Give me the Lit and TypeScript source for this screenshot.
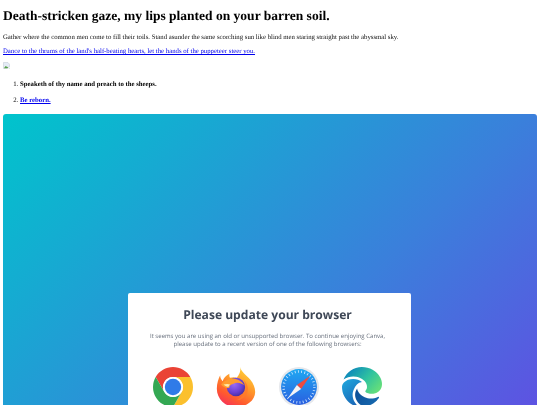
import { LitElement, html, css } from "lit";
import { customElement } from "lit/decorators.js";

@customElement("app-root")
export class AppRoot extends LitElement {
  static styles = css`
    :host { display: block; height: 405px; overflow: hidden; font-family: "Liberation Serif", serif; color: #000; }
    .page { padding: 0 3px; filter: blur(0.35px); text-rendering: geometricPrecision; }
    h1 { margin: 0; padding-top: 7px; font-size: 13.5px; line-height: 18px; font-weight: 700; }
    .lead { margin: 8px 0 0; font-size: 6.75px; line-height: 9px; color: #111; }
    .link { display: block; margin-top: 5px; font-size: 6.75px; line-height: 9px; color: #0000ee; text-decoration: underline; }
    .broken { display: block; margin-top: 6px; width: 7px; height: 7px; }
    ol { margin: 10.5px 0 0; padding: 0 0 0 17px; font-size: 6.75px; line-height: 9px; }
    li { margin-bottom: 7.5px; font-weight: 400; }
    li b { font-weight: 700; }
    li a { color: #0000ee; text-decoration: underline; font-weight: 700; }
    .hero {
      margin-top: 9px; height: 420px; border-radius: 3px; box-sizing: border-box; padding: 179px 1px 0 0;
      background: linear-gradient(135deg, #00c4cc 0%, #3a80db 55%, #7d2ae8 115%);
      display: flex; justify-content: center; align-items: flex-start;
    }
    .panel {
      width: 283px; background: #fff; border-radius: 2px; box-sizing: border-box; padding: 13px 4px 40px 0;
      display: flex; flex-direction: column; align-items: center; font-family: "Open Sans", sans-serif;
    }
    h2 { margin: 0; font-size: 12.1px; line-height: 18px; font-weight: 700; color: #3e4756; }
    .msg { margin: 7.5px 0 0; font-size: 6.06px; line-height: 8px; color: #666e7b; text-align: center; width: 270px; }
    .icons { display: flex; gap: 23px; margin-top: 19.5px; }
    svg.ic { width: 40px; height: 40px; display: block; flex: none; }
  `;

  render() {
    return html`<div class="page">
      <h1>Death-stricken gaze, my lips planted on your barren soil.</h1>
      <p class="lead">Gather where the common men come to fill their toils. Stand asunder the same scorching sun like blind men staring straight past the abyssmal sky.</p>
      <a class="link" href="#">Dance to the thrums of the land's half-beating hearts, let the hands of the puppeteer steer you.</a>
      <svg class="broken" viewBox="0 0 16 16"><path d="M1 1h10l4 4v6l-3 1-2 3H1z" fill="#e4ebf5" stroke="#b4bcc8"/><path d="M2 14l4-5 3 2 3 1-2 2z" fill="#58a04a"/><path d="M14 13l-1 2h2z" fill="#58a04a"/></svg>
      <ol>
        <li><b>Speaketh of thy name and preach to the sheeps.</b></li>
        <li><a href="#">Be reborn.</a></li>
      </ol>
      <div class="hero">
        <div class="panel">
          <h2>Please update your browser</h2>
          <p class="msg">It seems you are using an old or unsupported browser. To continue enjoying Canva,<br />please update to a recent version of one of the following browsers:</p>
          <div class="icons">
            <svg class="ic" viewBox="2 2 44 44">
              <path d="M43.05 13H24A11 11 0 0 0 14.470 29.500L4.950 13A22 22 0 0 1 43.05 13z" fill="#ea4335"/>
              <path d="M24 46L33.530 29.500A11 11 0 0 0 24 13H43.050A22 22 0 0 1 24 46z" fill="#fbc02d"/>
              <path d="M4.950 13L14.470 29.500A11 11 0 0 0 33.530 29.500L24 46A22 22 0 0 1 4.950 13z" fill="#34a853"/>
              <circle cx="24" cy="24" r="11" fill="#fff"/><circle cx="24" cy="24" r="9" fill="#2f7be8"/>
            </svg>
            <svg class="ic" viewBox="0 0 48 48">
              <defs>
                <linearGradient id="fx" x1="0.8" y1="0" x2="0.25" y2="1"><stop offset="0" stop-color="#ffdb3d"/><stop offset="0.4" stop-color="#ff9a2a"/><stop offset="0.75" stop-color="#ff5a2e"/><stop offset="1" stop-color="#f5305c"/></linearGradient>
                <radialGradient id="fp" cx="0.4" cy="0.35" r="0.75"><stop offset="0" stop-color="#9a6cf5"/><stop offset="0.6" stop-color="#6a3fd0"/><stop offset="1" stop-color="#3b2a90"/></radialGradient>
              </defs>
              <path d="M29 0c1 6 7 9 12 15 4 5 6 10 6 15 0 10-10 18-23 18C11 48 1 38 1 26c0-6 2-12 4-16 0 3 1 5 3 7 1-4 4-7 8-9 0 2 0 4 1 5 3-1 6-1 8 0 3-4 5-8 4-13z" fill="url(#fx)"/>
              <circle cx="24" cy="24" r="11" fill="url(#fp)"/>
              <path d="M6 21c3-4 8-7 14-7 6 0 11 3 14 8-4-3-9-4-13-2-4 1-5 3-5 5-4 1-7-1-10-4z" fill="#ff9c2e"/>
              <path d="M9 21c3-1 6-1 8 0-1 1-2 2-2 3-2 0-4-1-6-3z" fill="#ffe9a8"/>
              <path d="M33 15c4 4 6 9 5 14-1 6-7 11-14 11 5-2 10-6 11-12 1-5 0-9-2-13z" fill="#ff7a2a" opacity="0.8"/>
            </svg>
            <svg class="ic" viewBox="0 0 48 48">
              <defs><linearGradient id="sf" x1="0" y1="0" x2="0" y2="1"><stop offset="0" stop-color="#1fa8f2"/><stop offset="1" stop-color="#2a5fe0"/></linearGradient></defs>
              <circle cx="24" cy="24" r="24" fill="#e6e8ec"/>
              <circle cx="24" cy="24" r="21.500" fill="url(#sf)"/>
              <circle cx="24" cy="24" r="18.500" fill="none" stroke="#cfe6ff" stroke-width="3" stroke-dasharray="1 2.880"/>
              <path d="M37.500 10.500L21.500 21.500l5 5z" fill="#f04a3e"/>
              <path d="M10.500 37.500L26.500 26.500l-5-5z" fill="#f4f4f6"/>
            </svg>
            <svg class="ic" viewBox="0 0 24 24">
              <defs>
                <linearGradient id="eg" x1="0.05" y1="0.2" x2="0.95" y2="0.75"><stop offset="0" stop-color="#0c85bd"/><stop offset="0.55" stop-color="#2fc2a0"/><stop offset="1" stop-color="#62dd7c"/></linearGradient>
                <linearGradient id="eb" x1="0.2" y1="0.1" x2="0.7" y2="1"><stop offset="0" stop-color="#1f9fd8"/><stop offset="1" stop-color="#1a62b4"/></linearGradient>
                <linearGradient id="en" x1="0" y1="0" x2="1" y2="0.5"><stop offset="0" stop-color="#0d4e96"/><stop offset="1" stop-color="#1667ad"/></linearGradient>
              </defs>
              <path fill="url(#en)" d="M21.860 17.860q.14 0 .25.12.1.13.1.25t-.11.33l-.32.46-.43.53-.44.5q-.21.25-.38.42l-.22.23q-.58.53-1.34 1.04-.76.51-1.6.91-.86.4-1.74.64t-1.67.24q-.9 0-1.69-.28-.8-.28-1.48-.78-.68-.5-1.22-1.170-.53-.66-.92-1.440-.38-.77-.58-1.600-.2-.83-.2-1.670 0-1 .32-1.960.33-.97.87-1.800.14.95.55 1.770.41.82 1.020 1.500.6.68 1.380 1.210.78.54 1.640.9.86.36 1.770.56.92.2 1.800.2 1.120 0 2.180-.24 1.060-.23 2.060-.72l.2-.1.2-.05z"/>
              <path fill="url(#eb)" d="M6.360 16.590q0 1.100.27 2.150.27 1.060.78 2.030.51.96 1.240 1.770.74.82 1.660 1.400-1.470-.2-2.800-.74-1.330-.55-2.480-1.370-1.150-.83-2.080-1.900-.92-1.070-1.580-2.330T.36 14.940Q0 13.540 0 12.060q0-.81.32-1.490.31-.68.83-1.230.53-.55 1.200-.96.66-.4 1.350-.66.74-.27 1.500-.39.78-.12 1.550-.12.7 0 1.420.1.72.12 1.400.35.68.23 1.320.57.63.35 1.160.83-.35 0-.7.07-.33.07-.65.23v-.02q-.63.28-1.200.74-.57.46-1.050 1.040-.48.58-.87 1.260-.38.67-.65 1.390-.27.71-.42 1.440-.15.72-.15 1.380z"/>
              <path fill="url(#eg)" d="M11.960.06q1.700 0 3.330.39 1.630.38 3.070 1.150 1.430.77 2.620 1.930 1.180 1.160 1.980 2.700.49.94.76 1.960.28 1 .28 2.080 0 .89-.23 1.700-.24.8-.69 1.480-.45.68-1.100 1.220-.64.53-1.450.88-.54.24-1.110.36-.58.13-1.160.13-.42 0-.97-.03-.54-.03-1.100-.12-.55-.1-1.050-.28-.5-.19-.84-.5-.12-.09-.23-.24-.1-.16-.1-.33 0-.15.16-.35.16-.2.35-.5.2-.28.36-.68.16-.4.16-.95 0-1.060-.4-1.960-.4-.91-1.060-1.640-.66-.74-1.520-1.280-.86-.55-1.790-.89-.84-.3-1.720-.44-.87-.14-1.760-.14-1.550 0-3.060.45T.94 7.550q.71-1.740 1.810-3.130 1.100-1.380 2.520-2.350Q6.680 1.100 8.370.580q1.700-.52 3.580-.52z"/>
            </svg>
          </div>
        </div>
      </div>
    </div>`;
  }
}
